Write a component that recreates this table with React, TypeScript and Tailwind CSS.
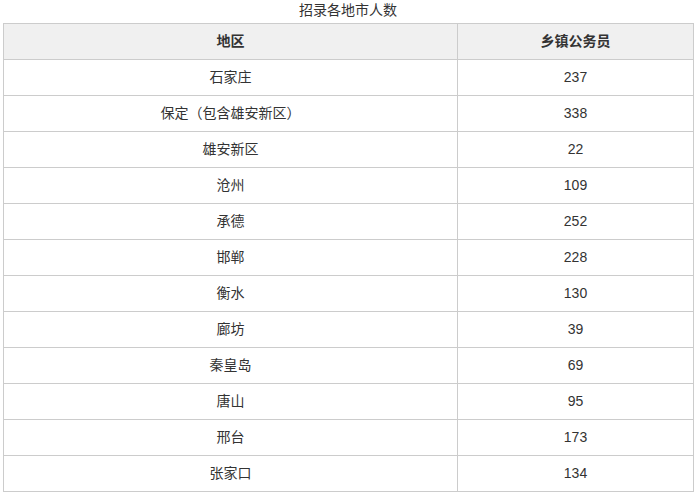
const ROWS: [string, number][] = [
  ["石家庄", 237],
  ["保定（包含雄安新区）", 338],
  ["雄安新区", 22],
  ["沧州", 109],
  ["承德", 252],
  ["邯郸", 228],
  ["衡水", 130],
  ["廊坊", 39],
  ["秦皇岛", 69],
  ["唐山", 95],
  ["邢台", 173],
  ["张家口", 134],
];

export default function App() {
  return (
    <div
      className="w-[696px] h-[496px] bg-white text-[#333] text-[14px] [text-spacing-trim:space-all]"
      style={{ fontFamily: '"Liberation Sans", "Noto Sans CJK SC", sans-serif' }}
    >
      <p className="h-[23px] leading-[21px] text-center">招录各地市人数</p>
      <table className="ml-[3px] w-[691px] border-collapse">
        <thead>
          <tr className="h-[36px] bg-[#f0f0f0]">
            <th className="w-[454px] border border-[#ccc] font-bold">地区</th>
            <th className="border border-[#ccc] font-bold">乡镇公务员</th>
          </tr>
        </thead>
        <tbody>
          {ROWS.map(([area, n]) => (
            <tr key={area} className="h-[36px]">
              <td className="border border-[#ccc] text-center">{area}</td>
              <td className="border border-[#ccc] text-center">{n}</td>
            </tr>
          ))}
        </tbody>
      </table>
    </div>
  );
}
